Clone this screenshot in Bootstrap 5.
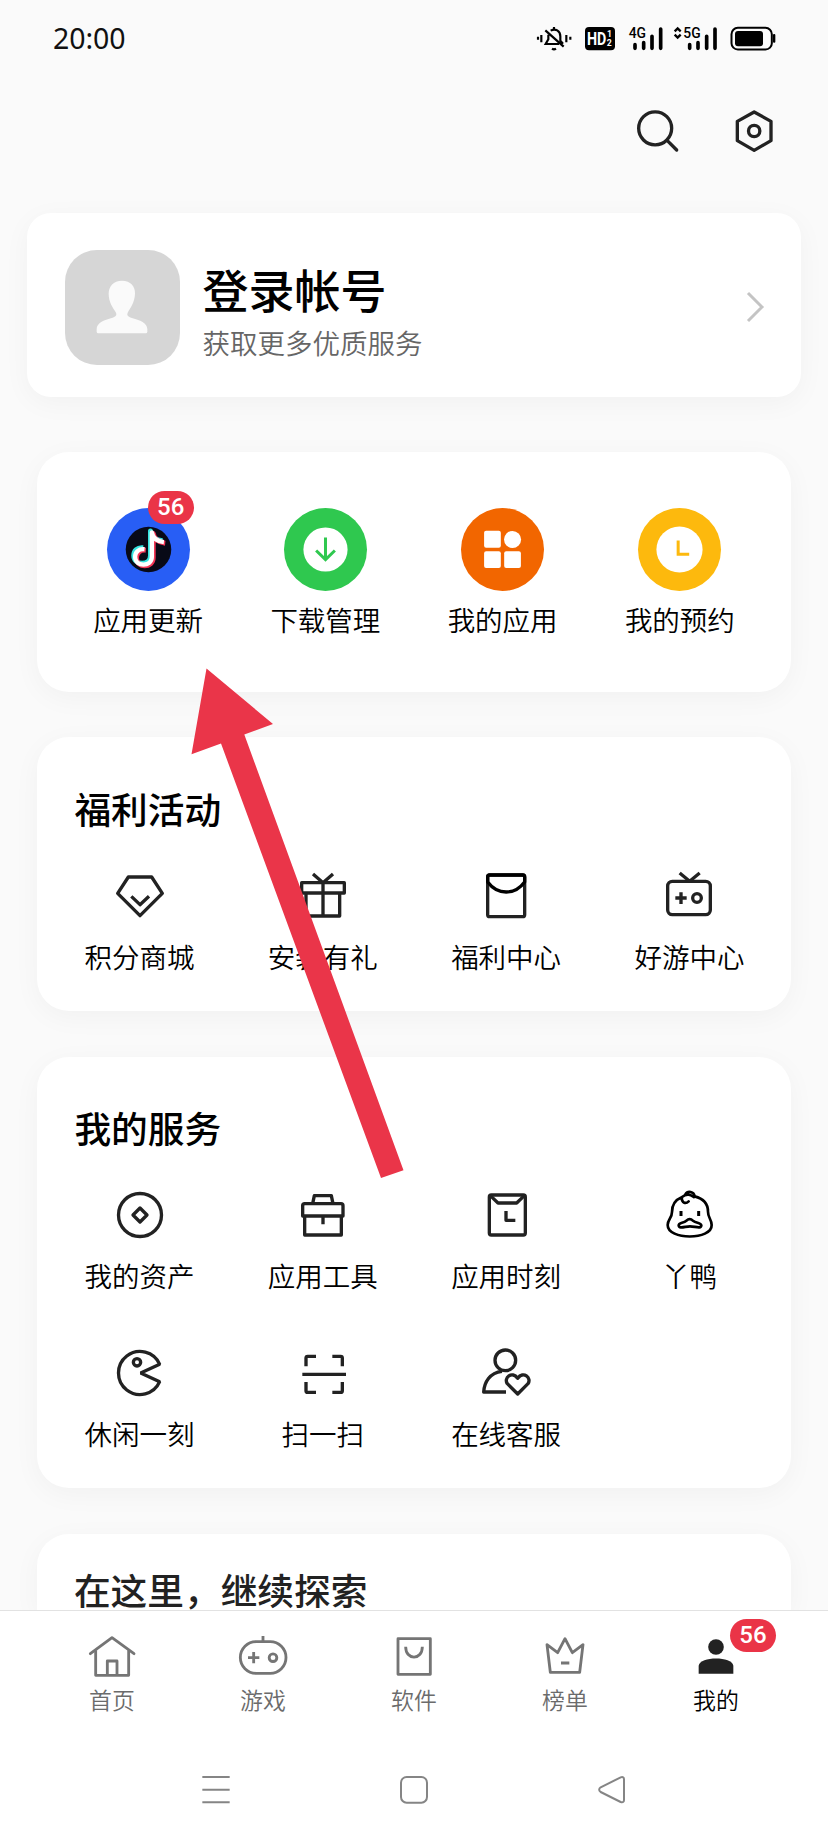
<!DOCTYPE html>
<html lang="zh-CN">
<head>
<meta charset="utf-8">
<meta name="viewport" content="width=device-width, initial-scale=1">
<title>我的</title>
<link href="https://cdn.jsdelivr.net/npm/bootstrap@5.3.0/dist/css/bootstrap.min.css" rel="stylesheet">
<style>
  body { background: #fafafa; color: #000; font-family: "Noto Sans CJK SC", sans-serif; height: 1840px; overflow: hidden; }
  svg { display: block; overflow: visible; }
  .screen { width: 828px; height: 1840px; overflow: hidden; }
  .statusbar { height: 76px; padding: 0 52px 0 53px; }
  .clock { font: 400 28.5px/76px "Noto Sans", sans-serif; letter-spacing: -.1px; color: #111; }
  .toolbar { height: 110px; padding-right: 50.500px; gap: 49px; }
  .panel { background: #fff; border: 0; border-radius: 32px; margin: 0 37px; box-shadow: 0 6px 28px rgba(0,0,0,.04); }
  .profile { margin: 27px 27px 55px; height: 184px; border-radius: 24px; padding: 4px 37.500px 0 37.500px; }
  .avatar { width: 115px; height: 115px; border-radius: 32px; background: #d6d6d6; }
  .profile-text { margin-left: 23px; padding-top: 5px; }
  .login-name { font-size: 46px; line-height: 56px; font-weight: 500; }
  .login-sub { font-size: 27.500px; line-height: 34px; font-weight: 350; color: #666; margin-top: 9px; }
  .quick { height: 240px; margin-bottom: 45px; padding: 56px 22.5px 0; }
  .disc { width: 83px; height: 83px; }
  .label-text { font-size: 27.500px; line-height: 32px; font-weight: 350; white-space: nowrap; }
  .quick .label-text { margin-top: 12px; }
  .count { background: #ea3447; color: #fff; font: 500 24px/33px Roboto, sans-serif; width: 46px; height: 32.5px; text-align: center; }
  .quick .count { left: 41px; top: -17px; }
  .section-title { font-size: 36.700px; line-height: 44px; font-weight: 500; padding-left: 26.500px; margin: 0 0 41.5px; }
  .tiles { row-gap: 58px; }
  .tiles .label-text { margin-top: 20px; }
  .section { padding: 49px 9.900px 0 10.900px; }
  .ico { width: 48px; height: 48px; }
  .line { fill: none; stroke: #222; stroke-width: 10; stroke-linejoin: round; }
  .tabs { height: 105px; border-top: 1px solid #e2e2e2; padding: 22px 36.5px 0; background: #fff; margin-top: -1px; position: relative; }
  .tab-text { font-size: 22.9px; line-height: 28px; font-weight: 350; color: #6b6b6b; margin-top: 4px; }
  .tabs .line { stroke: #757575; stroke-width: 8.500; }
  .tabs .count { left: 89.5px; top: -14px; }
  .sysnav { height: 125px; background: #fff; padding: 0 117px; }
  .sysnav .line { stroke: #858585; stroke-width: 6; }
  .pointer-arrow { left: 0; top: 0; z-index: 5; pointer-events: none; }
</style>
</head>
<body>
<main class="screen position-relative d-flex flex-column">
  <header>
    <div class="statusbar d-flex justify-content-between">
      <span class="clock">20:00</span>
      <svg width="240" height="76" viewBox="108 0 720 228">
        <!-- muted bell -->
        <g fill="none" stroke="#000" stroke-width="6.500" stroke-linecap="butt">
          <path d="M114 110v9M124 105v22M199 105v22M211 110v9"/>
          <path d="M136 91L191 140M145 104v14l-8 14h40M152 92c14-8 29 0 29 17v13l8 9M162 81v7M156 146q6 4 12 0"/>
        </g>
        <rect x="255" y="81" width="90" height="70" rx="12"/>
        <g fill="#fff" font-family="Roboto" font-weight="700">
          <text x="261" y="135" font-size="54" textLength="58" lengthAdjust="spacingAndGlyphs">HD</text>
          <text x="321" y="111" font-size="26">1</text>
          <text x="320" y="138" font-size="26">2</text>
        </g>
        <g font-family="Roboto" font-weight="500" font-size="45">
          <text x="386" y="114" textLength="52" lengthAdjust="spacingAndGlyphs">4G</text>
          <text x="550" y="114" textLength="52" lengthAdjust="spacingAndGlyphs">5G</text>
        </g>
        <g stroke="#000" stroke-width="11" stroke-linecap="round">
          <path d="M405 134v11M431 128v17M456 109v36M482 87v58M569 134v11M594 128v17M620 109v36M645 87v58"/>
        </g>
        <path d="M524 94l9-9 9 9M524 104l9 9 9-9" fill="none" stroke="#000" stroke-width="7"/>
        <rect x="694.500" y="83.500" width="121" height="65" rx="19" fill="none" stroke="#000" stroke-width="6"/>
        <rect x="705" y="93" width="84" height="46" rx="9"/>
        <rect x="819" y="102" width="7" height="26" rx="3"/>
      </svg>
    </div>
    <div class="toolbar d-flex justify-content-end align-items-center">
      <svg class="ico" viewBox="399 321 144 144"><g class="line" stroke-linecap="round"><circle cx="465.500" cy="385" r="49.500"/><path d="M502 422l28 28"/></g></svg>
      <svg class="ico" viewBox="691 321 144 144"><g class="line"><path d="M763.500 336l50.500 28v58l-50.500 29-50.500-29v-58z"/><circle cx="763.500" cy="393" r="17"/></g></svg>
    </div>
  </header>

  <section class="panel card profile flex-row align-items-center">
    <div class="avatar flex-shrink-0">
      <svg width="115" height="115" viewBox="194 180 345 345"><path fill="#fafafa" d="M365 272c26 0 40 17 39 39-1 27-14 42-22 57-3 8 1 11 10 15 28 8 49 15 49 35v7q0 5-5 5H294q-5 0-5-5v-7c0-20 20-27 48-35 9-4 13-7 10-15-9-15-22-31-22-57 0-22 14-39 40-39z"/></svg>
    </div>
    <div class="profile-text flex-grow-1">
      <div class="login-name">登录帐号</div>
      <div class="login-sub">获取更多优质服务</div>
    </div>
    <svg width="18" height="32" viewBox="0 0 18 32"><path d="M2 2l14 14L2 30" fill="none" stroke="#c4c4c4" stroke-width="3"/></svg>
  </section>

  <section class="panel card quick">
    <div class="row g-0 row-cols-4">
      <div class="col d-flex flex-column align-items-center">
        <div class="disc position-relative">
          <svg width="83" height="83" viewBox="231 203 248 248">
            <circle cx="355" cy="327" r="124" fill="#285ef5"/><circle cx="355" cy="327" r="68" fill="#080a17"/>
            <g fill="none" stroke-width="15" stroke-linejoin="round">
              <path stroke="#36e4e0" d="M341 323c-18-2-28 9-28 23 0 31 50 31 50 0v-73c3 18 17 27 36 29" transform="translate(-2 -1)"/>
              <path stroke="#f33555" d="M341 323c-18-2-28 9-28 23 0 31 50 31 50 0v-73c3 18 17 27 36 29" transform="translate(6 6)"/>
              <path stroke="#fff" stroke-width="13" d="M341 323c-18-2-28 9-28 23 0 31 50 31 50 0v-73c3 18 17 27 36 29" transform="translate(2 3)"/>
            </g>
          </svg>
          <span class="count rounded-pill position-absolute">56</span>
        </div>
        <span class="label-text">应用更新</span>
      </div>
      <div class="col d-flex flex-column align-items-center">
        <svg class="disc" viewBox="762 203 248 248"><circle cx="886" cy="327" r="124" fill="#2fc84f"/><circle cx="886" cy="327" r="66" fill="#fff"/><path d="M886 291v65M858 330l28 27 28-27" fill="none" stroke="#2fc84f" stroke-width="9"/></svg>
        <span class="label-text">下载管理</span>
      </div>
      <div class="col d-flex flex-column align-items-center">
        <svg class="disc" viewBox="123 203 248 248"><circle cx="247" cy="327" r="124" fill="#f26600"/><g fill="#fff"><rect x="192" y="271" width="50" height="51" rx="6"/><circle cx="277" cy="297" r="25.500"/><rect x="192" y="332" width="50" height="50" rx="6"/><rect x="252" y="332" width="50" height="50" rx="6"/></g></svg>
        <span class="label-text">我的应用</span>
      </div>
      <div class="col d-flex flex-column align-items-center">
        <svg class="disc" viewBox="654 203 248 248"><circle cx="778" cy="327" r="124" fill="#fdb90d"/><circle cx="778" cy="327" r="69" fill="#fff"/><path d="M774 300v41h33" fill="none" stroke="#fdb90d" stroke-width="9"/></svg>
        <span class="label-text">我的预约</span>
      </div>
    </div>
  </section>

  <section class="panel card section" style="height:274px;margin-bottom:45.500px">
    <h2 class="section-title">福利活动</h2>
    <div class="row g-0 row-cols-4 tiles">
      <div class="col d-flex flex-column align-items-center">
        <svg class="ico" viewBox="256 425 144 144"><path class="line" d="M293 440h70l32 49-67 67-67-67zM302 498l26 25 27-25"/></svg>
        <span class="label-text">积分商城</span>
      </div>
      <div class="col d-flex flex-column align-items-center">
        <svg class="ico" viewBox="807 425 144 144"><path class="line" d="M815 457h128v31H815zM828 488v69h101v-69M879 457v100M849 431l30 26 30-26"/></svg>
        <span class="label-text">安装有礼</span>
      </div>
      <div class="col d-flex flex-column align-items-center">
        <svg class="ico" viewBox="186 425 144 144"><g class="line"><rect x="203" y="434" width="111" height="125" rx="6"/><path stroke="#000" d="M203 455c30 40 81 40 111 0v-15q0-6-6-6h-99q-6 0-6 6z"/></g></svg>
        <span class="label-text">福利中心</span>
      </div>
      <div class="col d-flex flex-column align-items-center">
        <svg class="ico" viewBox="736 425 144 144"><g class="line"><rect x="744" y="453" width="128" height="100" rx="14"/><path d="M780 428l30 25 30-25M767 503h34M784 486v35"/><circle cx="832" cy="503" r="13"/></g></svg>
        <span class="label-text">好游中心</span>
      </div>
    </div>
  </section>

  <section class="panel card section" style="height:431.500px;margin-bottom:46px;padding-top:48px">
    <h2 class="section-title" style="margin-bottom:42.500px">我的服务</h2>
    <div class="row g-0 row-cols-4 tiles">
      <div class="col d-flex flex-column align-items-center">
        <svg class="ico" viewBox="257 421 144 144"><g class="line"><circle cx="329" cy="493" r="64.500"/><path d="M329 472l21 21-21 21-21-21z"/></g></svg>
        <span class="label-text">我的资产</span>
      </div>
      <div class="col d-flex flex-column align-items-center">
        <svg class="ico" viewBox="807 421 144 144"><path class="line" d="M848 459l5-24h51l5 24M824 497v56h110v-56M818 465q0-6 6-6h109q6 0 6 6v31H818zM879 497v24"/></svg>
        <span class="label-text">应用工具</span>
      </div>
      <div class="col d-flex flex-column align-items-center">
        <svg class="ico" viewBox="186 421 144 144"><g class="line"><rect x="208" y="433" width="108" height="120" rx="6"/><path d="M211 435l23 22h56l23-22M258 481v28h28"/></g></svg>
        <span class="label-text">应用时刻</span>
      </div>
      <div class="col d-flex flex-column align-items-center">
        <svg class="ico" viewBox="737 421 144 144"><g class="line" style="stroke:#000;stroke-width:8"><path d="M787 440c-24 10-29 27-29 44 0 18-13 22-13 39 0 46 133 46 132 0 0-17-11-21-11-40 0-26-16-40-40-46-2-15-21-18-28-6M787 440c17-14 27-7 37-1M787 440c0 19 13 20 21 12" stroke-linecap="round"/><path d="M785 481v15M838 481v15" stroke-width="9"/><path d="M778 524c0-9 14-6 23-14 7-6 13-6 20 0 10 8 23 5 25 14-1 12-19 3-34 3-14 0-33 9-34-3z"/></g></svg>
        <span class="label-text">丫鸭</span>
      </div>
      <div class="col d-flex flex-column align-items-center">
        <svg class="ico" viewBox="257 897 144 144"><g class="line" style="stroke-linejoin:bevel"><path d="M388 943l-57 26 57 26A64.500 64.500 0 1 1 388 943z"/><circle cx="320" cy="937" r="11"/></g></svg>
        <span class="label-text">休闲一刻</span>
      </div>
      <div class="col d-flex flex-column align-items-center">
        <svg class="ico" viewBox="807 897 144 144"><path class="line" d="M828 949v-25q0-5 5-5h25M907 919h25q5 0 5 5v25M817 973h131M828 996v26q0 5 5 5h25M907 1027h25q5 0 5-5v-26"/></svg>
        <span class="label-text">扫一扫</span>
      </div>
      <div class="col d-flex flex-column align-items-center">
        <svg class="ico" viewBox="186 897 144 144"><g class="line"><circle cx="256" cy="931" r="31"/><path d="M246 964c-37 4-53 33-55 62h67"/><path d="M293 1032l-31-31c-12-17 14-40 31-16 17-24 43-1 31 16z"/></g></svg>
        <span class="label-text">在线客服</span>
      </div>
    </div>
  </section>

  <section class="panel card" style="height:77px;padding:32.500px 10.400px 0;border-radius:32px 32px 0 0">
    <h2 class="section-title mb-0" style="color:#222">在这里，继续探索</h2>
  </section>

  <nav class="tabs flex-shrink-0">
    <div class="d-flex">
      <div class="flex-fill w-100 d-flex flex-column align-items-center">
        <svg class="ico" viewBox="264 340 144 144"><g class="line"><path d="M287 392v75h99v-75M322 467v-43h29v43" /><path d="M271 402l65-48 66 48" stroke-linecap="round"/></g></svg>
        <span class="tab-text">首页</span>
      </div>
      <div class="flex-fill w-100 d-flex flex-column align-items-center">
        <svg class="ico" viewBox="718 340 144 144"><g class="line"><rect x="722" y="366" width="137" height="95" rx="47.500"/><path d="M790 349v17M745 414h34M762 397v34"/><circle cx="820" cy="414" r="11.500"/></g></svg>
        <span class="tab-text">游戏</span>
      </div>
      <div class="flex-fill w-100 d-flex flex-column align-items-center">
        <svg class="ico" viewBox="-72 340 144 144"><g class="line"><path d="M-48 357h97v107h-97z"/><path d="M-25 381c0 42 50 42 50 0"/></g></svg>
        <span class="tab-text">软件</span>
      </div>
      <div class="flex-fill w-100 d-flex flex-column align-items-center">
        <svg class="ico" viewBox="380 340 144 144"><path class="line" d="M398 375l32 24 22-42 22 42 32-24-10 83h-88zM440 430h25"/></svg>
        <span class="tab-text">榜单</span>
      </div>
      <div class="flex-fill w-100 d-flex flex-column align-items-center position-relative">
        <svg class="ico" viewBox="835 340 144 144"><g fill="#222"><circle cx="907" cy="382" r="23.500"/><path d="M855 462v-24c4-29 100-29 104 0v24z"/></g></svg>
        <span class="count rounded-pill position-absolute">56</span>
        <span class="tab-text text-black">我的</span>
      </div>
    </div>
  </nav>
  <div class="sysnav d-flex flex-shrink-0">
    <div class="flex-fill w-100 d-flex justify-content-center"><svg width="28" height="149" viewBox="607 584 84 447"><path class="line" d="M608 770h82M608 808h82M608 846h82"/></svg></div>
    <div class="flex-fill w-100 d-flex justify-content-center"><svg width="28" height="149" viewBox="-42 584 84 447"><rect class="line" x="-39" y="770" width="78" height="77" rx="17"/></svg></div>
    <div class="flex-fill w-100 d-flex justify-content-center"><svg width="28" height="149" viewBox="552 584 84 447"><path class="line" d="M560 801l60-30q10-3 10 6v62q0 9-10 6l-60-30q-9-7 0-14z"/></svg></div>
  </div>

  <!-- red arrow pointing at the update entry -->
  <svg class="pointer-arrow position-absolute" width="828" height="1840" viewBox="0 0 828 1840"><path fill="#ea3549" d="M206.500 668.500L273 724l-28.700 10.500L403.500 1170.300 381 1178 221 743.500 191.500 754.300z"/></svg>
</main>
<script src="https://cdn.jsdelivr.net/npm/bootstrap@5.3.0/dist/js/bootstrap.bundle.min.js"></script>
</body>
</html>
